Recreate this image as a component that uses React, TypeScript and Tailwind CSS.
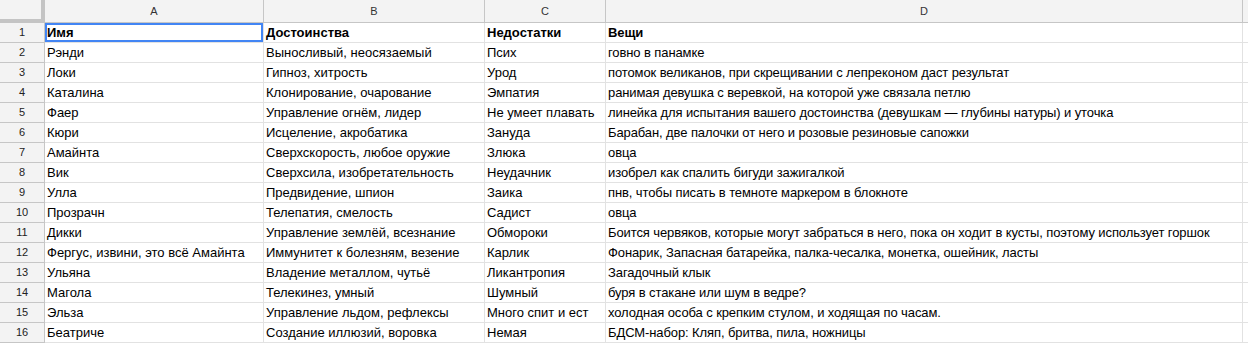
import React from 'react';

const COLS = ['A', 'B', 'C', 'D'];

const ROWS: string[][] = [
  ['Имя', 'Достоинства', 'Недостатки', 'Вещи'],
  ['Рэнди', 'Выносливый, неосязаемый', 'Псих', 'говно в панамке'],
  ['Локи', 'Гипноз, хитрость', 'Урод', 'потомок великанов, при скрещивании с лепреконом даст результат'],
  ['Каталина', 'Клонирование, очарование', 'Эмпатия', 'ранимая девушка с веревкой, на которой уже связала петлю'],
  ['Фаер', 'Управление огнём, лидер', 'Не умеет плавать', 'линейка для испытания вашего достоинства (девушкам — глубины натуры) и уточка'],
  ['Кюри', 'Исцеление, акробатика', 'Зануда', 'Барабан, две палочки от него и розовые резиновые сапожки'],
  ['Амайнта', 'Сверхскорость, любое оружие', 'Злюка', 'овца'],
  ['Вик', 'Сверхсила, изобретательность', 'Неудачник', 'изобрел как спалить бигуди зажигалкой'],
  ['Улла', 'Предвидение, шпион', 'Заика', 'пнв, чтобы писать в темноте маркером в блокноте'],
  ['Прозрачн', 'Телепатия, смелость', 'Садист', 'овца'],
  ['Дикки', 'Управление землёй, всезнание', 'Обмороки', 'Боится червяков, которые могут забраться в него, пока он ходит в кусты, поэтому использует горшок'],
  ['Фергус, извини, это всё Амайнта', 'Иммунитет к болезням, везение', 'Карлик', 'Фонарик, Запасная батарейка, палка-чесалка, монетка, ошейник, ласты'],
  ['Ульяна', 'Владение металлом, чутьё', 'Ликантропия', 'Загадочный клык'],
  ['Магола', 'Телекинез, умный', 'Шумный', 'буря в стакане или шум в ведре?'],
  ['Эльза', 'Управление льдом, рефлексы', 'Много спит и ест', 'холодная особа с крепким стулом, и ходящая по часам.'],
  ['Беатриче', 'Создание иллюзий, воровка', 'Немая', 'БДСМ-набор: Кляп, бритва, пила, ножницы'],
];

export default function App() {
  return (
    <div className="w-[1248px] h-[344px] overflow-hidden bg-white font-['Liberation_Sans',Arial,sans-serif] text-black">
      <div className="grid grid-cols-[45px_219px_221px_121px_637px_1fr]">
        {/* header row */}
        <div className="h-[23px] bg-[#f3f3f3] border-r-4 border-b-4 border-[#c4c4c4]" />
        {COLS.map((c) => (
          <div
            key={c}
            className="h-[23px] bg-[#f3f3f3] border-r border-b border-[#c6c6c6] flex items-center justify-center text-[11px] text-[#333]"
          >
            {c}
          </div>
        ))}
        <div className="h-[23px] bg-[#f3f3f3] border-b border-[#c6c6c6]" />

        {ROWS.map((row, i) => (
          <React.Fragment key={i}>
            <div className="h-[20px] bg-[#f3f3f3] border-r border-b border-[#c6c6c6] flex items-center justify-center text-[11px] text-[#222]">
              {i + 1}
            </div>
            {row.map((cell, j) => (
              <div
                key={j}
                className={`h-[20px] border-r border-b border-[#e2e2e2] pl-[2px] pt-[1px] whitespace-nowrap overflow-hidden leading-[18px] text-[13px] ${
                  j === 3 ? 'tracking-[-0.1px]' : ''
                } ${i === 0 ? 'font-bold' : ''} ${i === 0 && j === 0 ? 'shadow-[inset_0_0_0_2px_#4285f4]' : ''}`}
              >
                {cell}
              </div>
            ))}
            <div className="h-[20px] border-b border-[#e2e2e2]" />
          </React.Fragment>
        ))}
      </div>
    </div>
  );
}
